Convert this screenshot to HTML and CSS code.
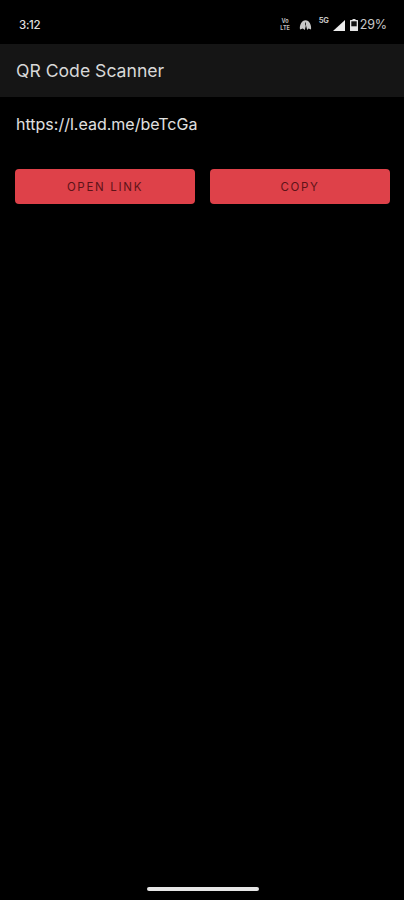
FILE: index.html
```html
<!DOCTYPE html>
<html lang="en">
<head>
<meta charset="utf-8">
<title>QR Code Scanner</title>
<link rel="stylesheet" href="styles.css">
</head>
<body>
<div class="screen">
  <div class="status">
    <span class="time">3:12</span>
    <div class="status-right">
      <span class="volte"><span>Vo</span><span>LTE</span></span>
      <svg class="hotspot" width="13" height="12" viewBox="0 0 13 12"><path d="M1 10.500C.2 6 2.800 1.200 6.500 1.200s6.300 4.800 5.500 9.300L9.500 9.500 8.200 11 7 6.200 5.800 11 3.800 9.500z" fill="#c8c8c8"/><path d="M6.500 3.500v3" stroke="#333" stroke-width="1"/></svg>
      <span class="net">5G</span>
      <svg class="signal" width="12" height="11" viewBox="0 0 12 11"><path d="M12 0v11H0z" fill="#ececec"/></svg>
      <svg class="battery" width="8" height="12" viewBox="0 0 8 12"><path d="M2.500 0h3v1h2a.5.5 0 0 1 .5.500v10a.5.5 0 0 1-.5.500h-7a.5.5 0 0 1-.5-.500v-10A.5.5 0 0 1 .5 1h2z" fill="#e4e4e4"/><rect x="1.300" y="2.300" width="5.400" height="5" fill="#111"/></svg>
      <span class="pct">29%</span>
    </div>
  </div>
  <header class="toolbar">QR Code Scanner</header>
  <main class="content">
    <p class="url">https://l.ead.me/beTcGa</p>
    <div class="actions">
      <button class="btn">OPEN LINK</button>
      <button class="btn">COPY</button>
    </div>
  </main>
  <div class="home"></div>
</div>
</body>
</html>
```
FILE: styles.css
```css
* { box-sizing: border-box; }
html, body { margin: 0; padding: 0; background: #000; }
.screen {
  width: 404px;
  height: 900px;
  display: flex;
  flex-direction: column;
  background: #000;
  font-family: Inter, "Liberation Sans", sans-serif;
  overflow: hidden;
}
.status {
  height: 44px;
  flex: none;
  display: flex;
  align-items: center;
  justify-content: space-between;
  padding: 5px 17px 0 19px;
  color: #dedede;
}
.time { font-size: 11.500px; font-weight: 500; letter-spacing: -0.300px; }
.status-right { display: flex; align-items: center; }
.volte {
  display: flex;
  flex-direction: column;
  align-items: center;
  width: 13px;
  font-size: 5.500px;
  line-height: 6.500px;
  font-weight: 700;
  color: #bdbdbd;
  letter-spacing: 0;
  white-space: nowrap;
}
.hotspot { margin-left: 7px; }
.net { margin-left: 7px; width: 13px; font-size: 7.500px; line-height: 7px; font-weight: 700; color: #c4c4c4; align-self: flex-start; letter-spacing: -0.200px; }
.signal { margin-left: 1px; margin-top: 1px; }
.battery { margin-left: 5px; }
.pct { margin-left: 2px; font-size: 12.500px; color: #c8c8c8; letter-spacing: -0.100px; }
.toolbar {
  height: 53px;
  flex: none;
  display: flex;
  align-items: center;
  padding-left: 16px;
  background: #151515;
  color: #d8d8d8;
  font-size: 17.600px;
  font-weight: 400;
}
.content { flex: 1; padding: 0 14px 0 15px; }
.url {
  margin: 17px 0 0 1px;
  height: 20px;
  line-height: 20px;
  font-size: 16px;
  color: #e0e0e0;
  white-space: nowrap;
}
.actions {
  display: flex;
  gap: 15px;
  margin-top: 35px;
}
.btn {
  width: 180px;
  height: 35px;
  padding: 0;
  border: 0;
  border-radius: 4px;
  background: #de4149;
  color: #5d1318;
  font-family: inherit;
  font-size: 11.500px;
  font-weight: 400;
  letter-spacing: 1.700px;
}
.home {
  position: absolute;
  left: 147px;
  top: 887px;
  width: 112px;
  height: 4px;
  border-radius: 2px;
  background: #e6e6e6;
}
```
